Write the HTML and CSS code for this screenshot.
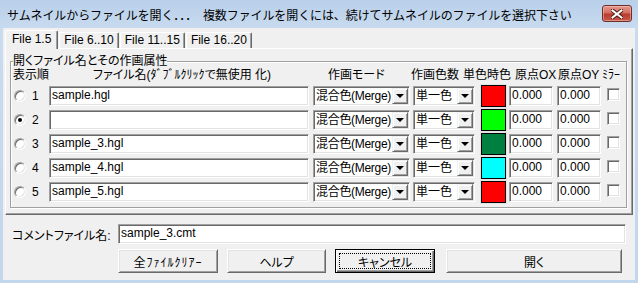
FILE: index.html
```html
<!DOCTYPE html>
<html lang="ja">
<head>
    <meta charset="UTF-8">
    <title>サムネイルからファイルを開く</title>
    <link rel="stylesheet" href="styles.css">
</head>
<body>

    <div class="window">
        <div class="titlebar">
            <span class="title">サムネイルからファイルを開く．．．　複数ファイルを開くには、続けてサムネイルのファイルを選択下さい</span>
            <div class="close-btn">
                <svg width="12" height="10" viewBox="0 0 12 10"><path d="M1.5 1.5L10.5 8.5M10.5 1.5L1.5 8.5" stroke="#4a1a14" stroke-width="4" stroke-linecap="square"/><path d="M1.5 1.5L10.5 8.5M10.5 1.5L1.5 8.5" stroke="#fff" stroke-width="2" stroke-linecap="square"/></svg>
            </div>
        </div>

        <div class="client">
            <div class="tabs">
                <div class="tab active">File 1.5</div>
                <div class="tab">File 6..10</div>
                <div class="tab">File 11..15</div>
                <div class="tab">File 16..20</div>
            </div>

            <div class="tab-panel">
                <fieldset class="group">
                    <legend>開くファイル名とその作画属性</legend>
                    <div class="head-row">
                        <span class="h-order">表示順</span>
                        <span class="h-name">ファイル名(ﾀﾞﾌﾞﾙｸﾘｯｸで無使用 化)</span>
                        <span class="h-mode">作画モード</span>
                        <span class="h-count">作画色数</span>
                        <span class="h-color">単色時色</span>
                        <span class="h-ox">原点OX</span>
                        <span class="h-oy">原点OY</span>
                        <span class="h-mirror">ﾐﾗｰ</span>
                    </div>

                    <div class="rows">
                        <div class="file-row">
                            <span class="radio"></span><span class="num">1</span>
                            <div class="field name">sample.hgl</div>
                            <div class="combo mode"><span class="combo-text">混合色(Merge)</span><span class="combo-btn"></span></div>
                            <div class="combo count"><span class="combo-text">単一色</span><span class="combo-btn"></span></div>
                            <span class="swatch red"></span>
                            <div class="field coord">0.000</div>
                            <div class="field coord oy">0.000</div>
                            <span class="check"></span>
                        </div>
                        <div class="file-row">
                            <span class="radio checked"></span><span class="num">2</span>
                            <div class="field name"></div>
                            <div class="combo mode"><span class="combo-text">混合色(Merge)</span><span class="combo-btn"></span></div>
                            <div class="combo count"><span class="combo-text">単一色</span><span class="combo-btn"></span></div>
                            <span class="swatch green"></span>
                            <div class="field coord">0.000</div>
                            <div class="field coord oy">0.000</div>
                            <span class="check"></span>
                        </div>
                        <div class="file-row">
                            <span class="radio"></span><span class="num">3</span>
                            <div class="field name">sample_3.hgl</div>
                            <div class="combo mode"><span class="combo-text">混合色(Merge)</span><span class="combo-btn"></span></div>
                            <div class="combo count"><span class="combo-text">単一色</span><span class="combo-btn"></span></div>
                            <span class="swatch dark-green"></span>
                            <div class="field coord">0.000</div>
                            <div class="field coord oy">0.000</div>
                            <span class="check"></span>
                        </div>
                        <div class="file-row">
                            <span class="radio"></span><span class="num">4</span>
                            <div class="field name">sample_4.hgl</div>
                            <div class="combo mode"><span class="combo-text">混合色(Merge)</span><span class="combo-btn"></span></div>
                            <div class="combo count"><span class="combo-text">単一色</span><span class="combo-btn"></span></div>
                            <span class="swatch cyan"></span>
                            <div class="field coord">0.000</div>
                            <div class="field coord oy">0.000</div>
                            <span class="check"></span>
                        </div>
                        <div class="file-row">
                            <span class="radio"></span><span class="num">5</span>
                            <div class="field name">sample_5.hgl</div>
                            <div class="combo mode"><span class="combo-text">混合色(Merge)</span><span class="combo-btn"></span></div>
                            <div class="combo count"><span class="combo-text">単一色</span><span class="combo-btn"></span></div>
                            <span class="swatch red"></span>
                            <div class="field coord">0.000</div>
                            <div class="field coord oy">0.000</div>
                            <span class="check"></span>
                        </div>
                    </div>
                </fieldset>
            </div>

            <div class="comment-row">
                <span class="comment-label">コメントファイル名:</span>
                <div class="field comment">sample_3.cmt</div>
            </div>

            <div class="button-row">
                <div class="btn btn-clear">全ﾌｧｲﾙｸﾘｱｰ</div>
                <div class="btn btn-help">ヘルプ</div>
                <div class="btn btn-cancel is-default">キャンセル</div>
                <div class="btn btn-open">開く</div>
            </div>
        </div>
    </div>

</body>
</html>
```

FILE: styles.css
```css
/* classic win32 dialog look, 638x283 */
* { box-sizing: border-box; }
html, body { margin: 0; padding: 0; background: #f0f0f0; }
body { font-family: "Liberation Sans", "Noto Sans CJK JP", sans-serif; font-size: 12px; color: #000; font-feature-settings: "palt"; }

.window { width: 638px; height: 283px; display: flex; flex-direction: column; background: linear-gradient(#b9d0ea, #c9dbef 30px, #c2d6ec); }
.titlebar { height: 28px; flex-shrink: 0; display: flex; align-items: center; padding: 1px 6px 0 7px; }
.title { flex: 1; font-family: "Noto Sans CJK JP", sans-serif; font-size: 12px; letter-spacing: -0.1px; font-feature-settings: normal; white-space: nowrap; overflow: hidden; }
.close-btn { align-self: flex-start; margin-top: 4px; width: 30px; height: 17px; display: flex; align-items: center; justify-content: center; border: 1px solid #6e2f28; border-radius: 3px; background: linear-gradient(#e49a8e, #d26c5f 48%, #b93a2c 52%, #c9584b); box-shadow: inset 0 0 0 1px rgba(255, 210, 200, 0.45); }

.client { flex: 1; display: flex; flex-direction: column; margin: 0 3px 3px; padding: 2px 2px 0; background: #f0f0f0; }

/* tab strip */
.tabs { display: flex; align-items: flex-end; height: 18px; gap: 1px; position: relative; z-index: 1; }
.tab { height: 16px; line-height: 14px; padding: 0 4px; border: 1px solid; border-color: #fff #696969 transparent #fff; border-bottom: none; border-radius: 2px 2px 0 0; box-shadow: inset -1px 0 0 #a0a0a0; white-space: nowrap; }
.tab.active { height: 19px; margin-bottom: -1px; padding: 0 6px; line-height: 16px; background: #f0f0f0; }

.tab-panel { height: 167px; flex-shrink: 0; padding: 6px 5px 0 4px; border: 1px solid; border-color: #fff #696969 #696969 #fff; box-shadow: inset -1px -1px 0 #a0a0a0; }

/* group box */
.group { margin: 0; padding: 0 0 4px; min-width: 0; border: 1px solid #a0a0a0; box-shadow: inset 1px 1px 0 #fff, 1px 1px 0 #fff; }
.group legend { margin-left: 2px; padding: 0; line-height: 12px; background: #f0f0f0; }

.head-row { display: flex; height: 16px; line-height: 16px; padding-left: 2px; white-space: nowrap; }
.h-order { width: 80px; }
.h-name { width: 235px; }
.h-mode { width: 83px; }
.h-count { width: 52px; }
.h-color { width: 52px; }
.h-ox { width: 43px; }
.h-oy { width: 44px; }

.rows { display: flex; flex-direction: column; gap: 2px; margin-top: 2px; }
.file-row { display: flex; align-items: center; height: 22px; padding-left: 3px; }

.radio { position: relative; width: 12px; height: 12px; margin-right: 6px; border-radius: 50%; border: 1px solid; border-color: #a0a0a0 #fff #fff #a0a0a0; background: #fff; box-shadow: inset 1px 1px 0 #696969, inset -1px -1px 0 #e3e3e3; }
.radio.checked::after { content: ""; position: absolute; left: 3px; top: 3px; width: 4px; height: 4px; border-radius: 50%; background: #000; }
.num { width: 17px; line-height: 16px; }

.field { height: 20px; padding-left: 2px; line-height: 17px; white-space: nowrap; overflow: hidden; background: #fff; border: 1px solid; border-color: #a0a0a0 #fff #fff #a0a0a0; box-shadow: inset 1px 1px 0 #696969, inset -1px -1px 0 #e3e3e3; }
.field.name { width: 260px; }
.field.coord { width: 44px; margin-left: 3px; }
.field.coord.oy { margin-left: 4px; }

.combo { display: flex; align-items: center; height: 20px; padding: 1px; background: #fff; border: 1px solid; border-color: #a0a0a0 #fff #fff #a0a0a0; box-shadow: inset 1px 1px 0 #696969, inset -1px -1px 0 #e3e3e3; }
.combo.mode { width: 97px; margin-left: 4px; }
.combo.mode .combo-text { letter-spacing: -0.3px; }
.combo.count { width: 62px; margin-left: 3px; }
.combo-text { flex: 1; min-width: 0; padding-left: 1px; line-height: 16px; white-space: nowrap; overflow: hidden; }
.combo-btn { position: relative; width: 16px; height: 16px; flex-shrink: 0; background: #f0f0f0; border: 1px solid; border-color: #f0f0f0 #696969 #696969 #f0f0f0; box-shadow: inset 1px 1px 0 #fff, inset -1px -1px 0 #a0a0a0; }
.combo-btn::after { content: ""; position: absolute; left: 3px; top: 5px; border-style: solid; border-width: 4px 4px 0; border-color: #000 transparent transparent; }

.swatch { width: 25px; height: 22px; margin-left: 6px; border: 1px solid #000; box-shadow: 0 0 0 1px #e3e3e3; }
.swatch.red { background: #ff0000; }
.swatch.green { background: #00ff00; }
.swatch.dark-green { background: #008040; }
.swatch.cyan { background: #00ffff; }

.check { width: 13px; height: 13px; margin: -3px 0 0 6px; background: #fff; border: 1px solid; border-color: #a0a0a0 #fff #fff #a0a0a0; box-shadow: inset 1px 1px 0 #696969, inset -1px -1px 0 #e3e3e3; }

/* bottom area */
.comment-row { display: flex; align-items: center; height: 20px; margin-top: 9px; padding-left: 7px; }
.comment-label { width: 106px; }
.field.comment { flex: 1; margin-right: 7px; }

.button-row { display: flex; margin-top: 5px; padding-left: 113px; }
.btn { position: relative; height: 24px; display: flex; align-items: center; justify-content: center; background: #f0f0f0; border: 1px solid; border-color: #fff #696969 #696969 #fff; box-shadow: inset 1px 1px 0 #e3e3e3, inset -1px -1px 0 #a0a0a0; }
.btn-clear { width: 100px; letter-spacing: 1px; }
.btn-help { width: 99px; margin-left: 9px; }
.btn-cancel { width: 100px; margin-left: 9px; }
.btn-open { width: 176px; margin-left: 11px; }
.btn.is-default { border-color: #000; box-shadow: inset 1px 1px 0 #fff, inset -1px -1px 0 #696969, inset -2px -2px 0 #a0a0a0; }
.btn.is-default::after { content: ""; position: absolute; inset: 3px; border: 1px dotted #000; }
```
